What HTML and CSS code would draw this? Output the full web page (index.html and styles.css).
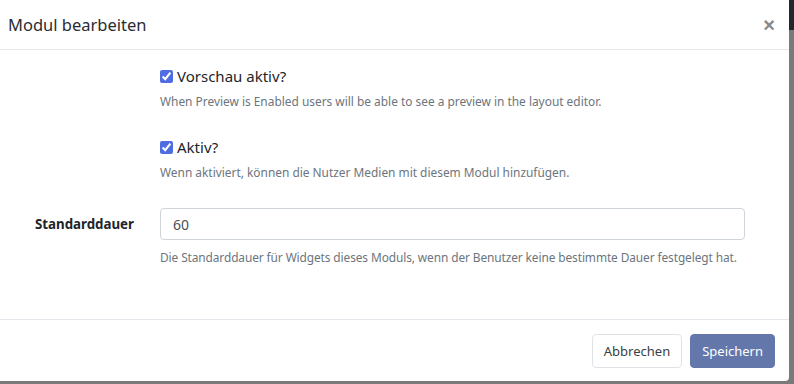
FILE: index.html
```html
<!DOCTYPE html>
<html lang="de">
<head>
  <meta charset="UTF-8">
  <title>Modul bearbeiten</title>
  <link rel="stylesheet" href="styles.css">
</head>
<body>
  <div class="modal">
    <header class="modal-header">
      <h4>Modul bearbeiten</h4>
      <button class="close" type="button">&times;</button>
    </header>
    <form class="modal-body">
      <div class="row">
        <div class="label"></div>
        <div class="field">
          <label class="check"><input type="checkbox" checked> Vorschau aktiv?</label>
          <small>When Preview is Enabled users will be able to see a preview in the layout editor.</small>
        </div>
      </div>
      <div class="row">
        <div class="label"></div>
        <div class="field">
          <label class="check"><input type="checkbox" checked> Aktiv?</label>
          <small>Wenn aktiviert, können die Nutzer Medien mit diesem Modul hinzufügen.</small>
        </div>
      </div>
      <div class="row">
        <label class="label" for="dauer">Standarddauer</label>
        <div class="field">
          <input type="text" id="dauer" value="60">
          <small class="help-input">Die Standarddauer für Widgets dieses Moduls, wenn der Benutzer keine bestimmte Dauer festgelegt hat.</small>
        </div>
      </div>
    </form>
    <footer class="modal-footer">
      <button class="btn btn-white" type="button">Abbrechen</button>
      <button class="btn btn-primary" type="button">Speichern</button>
    </footer>
  </div>
</body>
</html>
```

FILE: styles.css
```css
body {
  margin: 0;
  height: 384px;
  overflow: hidden;
  font-family: 'Noto Sans', 'Open Sans', sans-serif;
  color: #212529;
  background: linear-gradient(#24252d 0 30px, #7a7a7a 30px);
}
.modal {
  width: 789px;
  height: 381px;
  background: #fff;
  border-bottom-right-radius: 4px;
  display: flex;
  flex-direction: column;
}
.modal-header {
  height: 49px;
  border-bottom: 1px solid #e3e6ea;
  display: flex;
  align-items: center;
  justify-content: space-between;
  padding: 0 14px 0 8px;
}
.modal-header h4 {
  margin: 0;
  font-size: 16.5px;
  font-weight: 400;
  color: #2a2d33;
}
.close {
  background: none;
  border: none;
  padding: 0;
  font-size: 20px;
  font-weight: 700;
  color: #888;
  line-height: 1;
  cursor: pointer;
}
.modal-body {
  flex: 1;
  padding: 16px 0 0;
}
.row {
  display: grid;
  grid-template-columns: 160px 585px;
  margin-bottom: 27px;
}
.label {
  font-size: 13.3px;
  font-weight: 700;
  text-align: right;
  padding-right: 26px;
  line-height: 32px;
}
.field {
  display: flex;
  flex-direction: column;
}
.check {
  display: flex;
  align-items: center;
  gap: 4px;
  font-size: 15px;
  line-height: 20px;
}
.check input {
  margin: 0;
  width: 13px;
  height: 13px;
  accent-color: #4f6de0;
}
small {
  font-size: 11.9px;
  color: #6c757d;
  margin-top: 6px;
  line-height: 18px;
  white-space: nowrap;
}
.help-input {
  margin-top: 8px;
  letter-spacing: -0.1px;
}
.field input[type="text"] {
  height: 32px;
  box-sizing: border-box;
  border: 1px solid #ced4da;
  border-radius: 4px;
  padding: 0 12px;
  font: inherit;
  font-size: 14px;
  color: #495057;
}
.modal-footer {
  border-top: 1px solid #e3e6ea;
  height: 61px;
  display: flex;
  align-items: center;
  justify-content: flex-end;
  gap: 8px;
  padding: 0 14px;
}
.btn {
  height: 34px;
  padding: 0 11px;
  border-radius: 4px;
  font: inherit;
  font-size: 13px;
  cursor: pointer;
}
.btn-white {
  background: #fff;
  border: 1px solid #dfe3e8;
  color: #3a3f45;
}
.btn-primary {
  background: #6377ab;
  border: 1px solid #6377ab;
  color: #fff;
}
```
